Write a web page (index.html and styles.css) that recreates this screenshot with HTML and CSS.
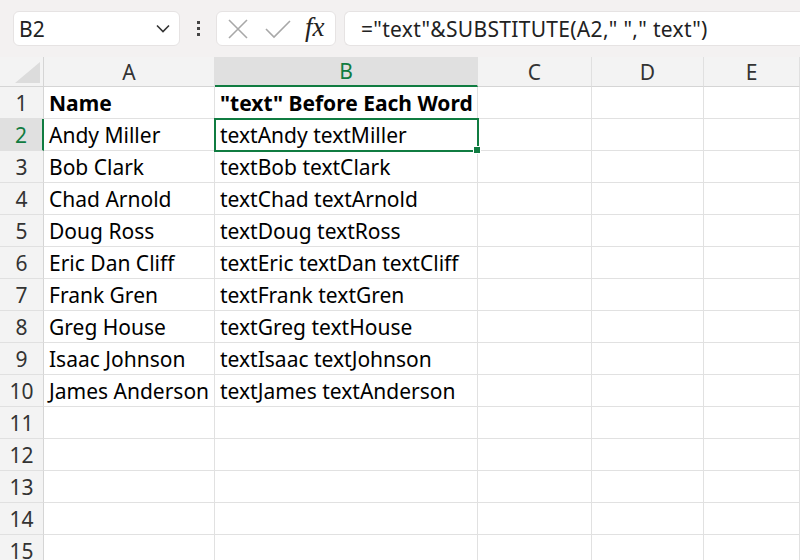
FILE: index.html
```html
<!DOCTYPE html>
<html lang="en">
<head>
    <meta charset="UTF-8" />
    <title>Sheet</title>
    <link rel="stylesheet" href="styles.css">
</head>
<body>
    <div class="topbar">
        <div class="namebox">
            <span>B2</span>
            <svg width="14" height="9" viewBox="0 0 14 9"><path d="M1 1.5 L7 7.5 L13 1.5" fill="none" stroke="#333" stroke-width="1.6"/></svg>
        </div>
        <div class="dots"><i></i><i></i><i></i></div>
        <div class="fxbox">
            <svg width="22" height="22" viewBox="0 0 22 22"><path d="M2 2 L20 20 M20 2 L2 20" stroke="#a8a8a8" stroke-width="1.6"/></svg>
            <svg width="26" height="20" viewBox="0 0 26 20"><path d="M1 10 L9 18 L25 2" fill="none" stroke="#a8a8a8" stroke-width="1.6"/></svg>
            <span class="fx">fx</span>
        </div>
        <div class="formula">="text"&amp;SUBSTITUTE(A2," "," text")</div>
    </div>

    <div class="sheet">
        <div class="corner"><div class="tri"></div></div>
        <div class="colhead">A</div>
        <div class="colhead active">B</div>
        <div class="colhead">C</div>
        <div class="colhead">D</div>
        <div class="colhead">E</div>

        <div class="rowhead">1</div><div class="cell bold">Name</div><div class="cell bold">"text" Before Each Word</div><div class="cell"></div><div class="cell"></div><div class="cell"></div>
        <div class="rowhead active">2</div><div class="cell">Andy Miller</div><div class="cell selected">textAndy textMiller<span class="handle"></span></div><div class="cell"></div><div class="cell"></div><div class="cell"></div>
        <div class="rowhead">3</div><div class="cell">Bob Clark</div><div class="cell">textBob textClark</div><div class="cell"></div><div class="cell"></div><div class="cell"></div>
        <div class="rowhead">4</div><div class="cell">Chad Arnold</div><div class="cell">textChad textArnold</div><div class="cell"></div><div class="cell"></div><div class="cell"></div>
        <div class="rowhead">5</div><div class="cell">Doug Ross</div><div class="cell">textDoug textRoss</div><div class="cell"></div><div class="cell"></div><div class="cell"></div>
        <div class="rowhead">6</div><div class="cell">Eric Dan Cliff</div><div class="cell">textEric textDan textCliff</div><div class="cell"></div><div class="cell"></div><div class="cell"></div>
        <div class="rowhead">7</div><div class="cell">Frank Gren</div><div class="cell">textFrank textGren</div><div class="cell"></div><div class="cell"></div><div class="cell"></div>
        <div class="rowhead">8</div><div class="cell">Greg House</div><div class="cell">textGreg textHouse</div><div class="cell"></div><div class="cell"></div><div class="cell"></div>
        <div class="rowhead">9</div><div class="cell">Isaac Johnson</div><div class="cell">textIsaac textJohnson</div><div class="cell"></div><div class="cell"></div><div class="cell"></div>
        <div class="rowhead">10</div><div class="cell">James Anderson</div><div class="cell">textJames textAnderson</div><div class="cell"></div><div class="cell"></div><div class="cell"></div>
        <div class="rowhead">11</div><div class="cell"></div><div class="cell"></div><div class="cell"></div><div class="cell"></div><div class="cell"></div>
        <div class="rowhead">12</div><div class="cell"></div><div class="cell"></div><div class="cell"></div><div class="cell"></div><div class="cell"></div>
        <div class="rowhead">13</div><div class="cell"></div><div class="cell"></div><div class="cell"></div><div class="cell"></div><div class="cell"></div>
        <div class="rowhead">14</div><div class="cell"></div><div class="cell"></div><div class="cell"></div><div class="cell"></div><div class="cell"></div>
        <div class="rowhead">15</div><div class="cell"></div><div class="cell"></div><div class="cell"></div><div class="cell"></div><div class="cell"></div>
    </div>
</body>
</html>
```

FILE: styles.css
```css
html,
body {
    margin: 0;
    padding: 0;
    width: 800px;
    height: 560px;
    overflow: hidden;
    background: #fff;
    font-family: 'Noto Sans', 'Open Sans', sans-serif;
    color: #000;
}
.topbar {
    height: 57px;
    background: #f3f1f1;
    display: flex;
    align-items: center;
    padding-left: 13px;
    box-sizing: border-box;
}
.namebox,
.fxbox,
.formula {
    height: 35px;
    background: #fff;
    border: 1px solid #e6e3e3;
    border-radius: 6px;
    box-sizing: border-box;
    display: flex;
    align-items: center;
}
.namebox {
    width: 167px;
    justify-content: space-between;
    padding: 0 9px 0 5px;
    font-size: 21px;
    color: #222;
}
.dots {
    width: 36px;
    display: flex;
    flex-direction: column;
    align-items: center;
    gap: 3px;
}
.dots i {
    width: 3px;
    height: 3px;
    background: #444;
    display: block;
}
.fxbox {
    width: 120px;
    padding: 0 6px 0 10px;
    gap: 16px;
}
.fx {
    font-family: 'Liberation Serif', serif;
    font-style: italic;
    font-size: 27px;
    color: #222;
    margin-left: -2px;
    margin-top: -3px;
}
.formula {
    flex: 1;
    margin-left: 8px;
    border-right: none;
    border-radius: 6px 0 0 6px;
    padding-left: 16px;
    font-size: 21px;
    letter-spacing: 0.3px;
    color: #222;
}
.sheet {
    display: grid;
    grid-template-columns: 44px 171px 263px 114px 112px 1fr;
    grid-template-rows: 30px repeat(15, 32px);
}
.corner {
    background: #f3f3f3;
    border-bottom: 1px solid #d5d5d5;
    border-right: 1px solid #d5d5d5;
    box-sizing: border-box;
    position: relative;
}
.tri {
    position: absolute;
    right: 3px;
    bottom: 3px;
    width: 25px;
    height: 21px;
    background: #dcdcdc;
    clip-path: polygon(100% 0, 100% 100%, 0 100%);
}
.colhead {
    background: #f3f3f3;
    border-bottom: 1px solid #d5d5d5;
    border-right: 1px solid #e0e0e0;
    box-sizing: border-box;
    display: flex;
    justify-content: center;
    align-items: center;
    font-size: 21px;
    color: #333;
}
.colhead.active {
    background: #e0e0e0;
    color: #107c41;
    border-bottom: 2px solid #107c41;
}
.rowhead {
    background: #f3f3f3;
    border-right: 1px solid #d5d5d5;
    border-bottom: 1px solid #e0e0e0;
    box-sizing: border-box;
    display: flex;
    justify-content: center;
    align-items: center;
    font-size: 21px;
    color: #333;
}
.rowhead.active {
    background: #e0e0e0;
    color: #107c41;
    border-right: 2px solid #107c41;
}
.cell {
    border-right: 1px solid #e1e1e1;
    border-bottom: 1px solid #e1e1e1;
    box-sizing: border-box;
    padding: 0 5px;
    display: flex;
    align-items: center;
    font-size: 21px;
    white-space: nowrap;
    position: relative;
}
.cell.bold {
    font-weight: bold;
}
.cell.selected {
    outline: 2px solid #107c41;
    outline-offset: -1px;
    z-index: 1;
}
.handle {
    position: absolute;
    right: -4px;
    bottom: -4px;
    width: 6px;
    height: 6px;
    background: #107c41;
    border: 1px solid #fff;
}
```
